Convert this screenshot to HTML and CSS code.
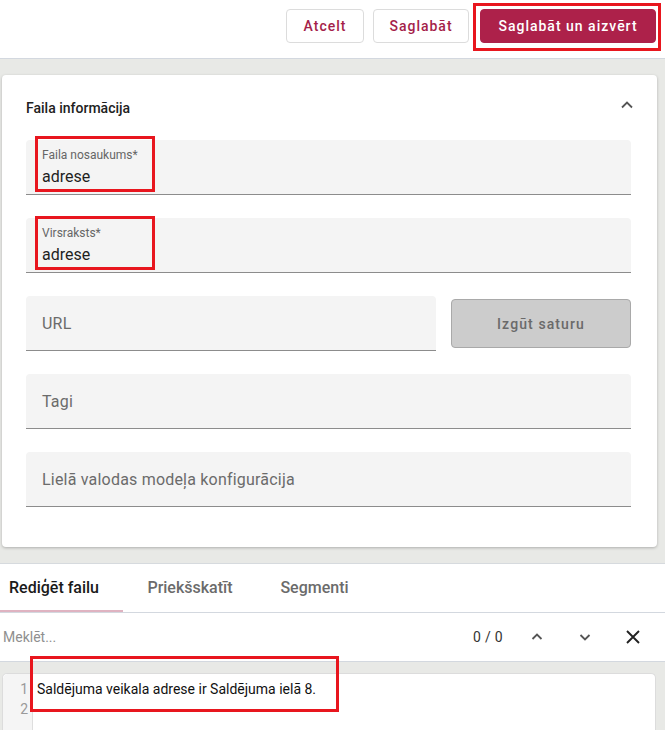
FILE: index.html
```html
<!DOCTYPE html>
<html lang="lv">
<head>
<meta charset="utf-8">
<title>Faila informācija</title>
<link rel="stylesheet" href="styles.css">
</head>
<body>
<div class="page">
  <header class="topbar">
    <button class="btn btn-outline">Atcelt</button>
    <button class="btn btn-outline">Saglabāt</button>
    <button class="btn btn-primary">Saglabāt un aizvērt</button>
  </header>

  <main class="main">
    <section class="card">
      <div class="card-head">
        <h2 class="card-title">Faila informācija</h2>
        <svg class="chev" width="14" height="10" viewBox="0 0 14 10"><path d="M2 7.5 L7 2.5 L12 7.5" fill="none" stroke="#555" stroke-width="1.8"/></svg>
      </div>
      <div class="fields">
        <div class="field filled">
          <span class="label">Faila nosaukums*</span>
          <span class="value">adrese</span>
        </div>
        <div class="field filled">
          <span class="label">Virsraksts*</span>
          <span class="value">adrese</span>
        </div>
        <div class="url-row">
          <div class="field empty url"><span class="placeholder">URL</span></div>
          <button class="btn-extract">Izgūt saturu</button>
        </div>
        <div class="field empty"><span class="placeholder">Tagi</span></div>
        <div class="field empty"><span class="placeholder">Lielā valodas modeļa konfigurācija</span></div>
      </div>
    </section>
  </main>

  <nav class="tabs">
    <div class="tab active">Rediģēt failu</div>
    <div class="tab">Priekšskatīt</div>
    <div class="tab">Segmenti</div>
  </nav>

  <div class="search">
    <span class="search-input">Meklēt...</span>
    <span class="count">0 / 0</span>
    <svg class="ic" width="16" height="16" viewBox="0 0 16 16"><path d="M3.5 10 L8 5.5 L12.5 10" fill="none" stroke="#555" stroke-width="1.8"/></svg>
    <svg class="ic" width="16" height="16" viewBox="0 0 16 16"><path d="M3.5 6 L8 10.5 L12.5 6" fill="none" stroke="#555" stroke-width="1.8"/></svg>
    <svg class="ic close" width="16" height="16" viewBox="0 0 16 16"><path d="M2 2 L14 14 M14 2 L2 14" fill="none" stroke="#222" stroke-width="1.9"/></svg>
  </div>

  <div class="editor-wrap">
    <div class="editor">
      <div class="gutter"><div>1</div><div>2</div></div>
      <div class="code"><div>Saldējuma veikala adrese ir Saldējuma ielā 8.</div><div>&nbsp;</div></div>
    </div>
  </div>

  <div class="mark m1"></div>
  <div class="mark m2"></div>
  <div class="mark m3"></div>
  <div class="mark m4"></div>
</div>
</body>
</html>
```

FILE: styles.css
```css
* { box-sizing: border-box; }
html, body { margin: 0; padding: 0; }
body {
  font-family: Roboto, "Noto Sans", "Liberation Sans", sans-serif;
  color: #222;
  background: #fff;
  width: 665px;
  height: 730px;
  overflow: hidden;
}
.page { position: relative; display: flex; flex-direction: column; height: 730px; }

.topbar {
  height: 59px;
  display: flex;
  justify-content: flex-end;
  align-items: flex-start;
  padding: 9px 9px 0 0;
  gap: 9px;
  border-bottom: 1px solid #d3d8df;
  background: #fff;
}
.btn {
  font-family: inherit;
  height: 34px;
  font-size: 14px;
  font-weight: 500;
  letter-spacing: 1px;
  border-radius: 4px;
  cursor: pointer;
}
.btn-outline {
  background: #fff;
  color: #a51f4a;
  border: 1px solid #dcdcdc;
  padding: 0 12px;
}
.btn-outline:first-child { width: 78px; }
.btn-outline:nth-child(2) { width: 96px; }
.btn-primary {
  margin-left: 2px;
  width: 176px;
  background: #ad214a;
  color: #fff;
  border: 1px solid #ad214a;
  padding: 0 10px;
}

.main {
  background: #e8e9e6;
  padding: 16px 8px 16px 2px;
}
.card {
  background: #fff;
  border-radius: 4px;
  box-shadow: 0 1px 3px rgba(0,0,0,0.25);
  height: 472px;
  padding: 0 26px 0 24px;
}
.card-head {
  height: 65px;
  display: flex;
  justify-content: space-between;
  align-items: center;
}
.card-title {
  margin: 0;
  font-size: 14px;
  font-weight: 500;
  color: #212121;
}
.chev { margin-right: -3px; margin-top: -6px; }

.fields { display: flex; flex-direction: column; gap: 23px; }
.field {
  height: 55px;
  background: #f4f4f4;
  border-bottom: 1px solid #8c8c8c;
  border-radius: 4px 4px 0 0;
  padding: 0 16px;
  display: flex;
  flex-direction: column;
  justify-content: center;
}
.field.filled { justify-content: flex-start; padding-top: 7px; }
.label { font-size: 12px; color: #666; line-height: 16px; }
.value { font-size: 16px; color: #1f1f1f; line-height: 22px; margin-top: 3px; }
.placeholder { font-size: 16px; color: #6b6b6b; letter-spacing: 0.2px; margin-top: 1px; }

.url-row { display: flex; align-items: center; gap: 15px; }
.field.url { width: 410px; }
.btn-extract {
  flex: 1;
  height: 49px;
  background: #cccccc;
  border: 1px solid #a9a9a9;
  border-radius: 4px;
  font-family: inherit;
  font-size: 14px;
  font-weight: 500;
  letter-spacing: 1.1px;
  color: #6a6a6a;
}

.tabs {
  display: flex;
  height: 50px;
  border-top: 1px solid #d6dade;
  border-bottom: 1px solid #d3d8df;
  background: #fff;
}
.tab {
  font-size: 16px;
  font-weight: 500;
  color: #6b6b6b;
  display: flex;
  align-items: center;
  justify-content: center;
  border-bottom: 2px solid transparent;
}
.tab:first-child { width: 123px; justify-content: flex-start; padding-left: 9px; }
.tab:nth-child(2) { width: 134px; }
.tab:nth-child(3) { width: 115px; }
.tab.active { color: #1a1a1a; border-bottom-color: #dfb3c1; }

.search {
  height: 49px;
  display: flex;
  align-items: center;
  border-bottom: 1px solid #d3d8df;
  background: #fff;
  padding-right: 24px;
}
.search-input {
  flex: 1;
  font-size: 14px;
  color: #8f8f8f;
  padding-left: 3px;
}
.count { font-size: 14px; color: #333; margin-right: 26px; letter-spacing: 0.3px; }
.ic { margin-left: 32px; }
.ic:first-of-type { margin-left: 0; }

.editor-wrap {
  flex: 1;
  background: #e8e9e6;
  padding: 11px 9px 0 2px;
}
.editor {
  height: 100%;
  background: #fff;
  border: 1px solid #dcdcdc;
  border-bottom: none;
  border-radius: 5px 5px 0 0;
  display: flex;
  padding-top: 5px;
  font-size: 14px;
  line-height: 20px;
}
.gutter {
  width: 30px;
  margin-top: -5px;
  padding-top: 5px;
  background: #f5f5f5;
  border-right: 1px solid #dedede;
  border-radius: 5px 0 0 0;
  color: #9a9a9a;
  text-align: right;
  padding-right: 4px;
}
.code { padding-left: 4px; color: #111; }

.mark {
  position: absolute;
  border: 3px solid #e8161e;
  pointer-events: none;
}
.m1 { left: 473px; top: 3px; width: 188px; height: 48px; }
.m2 { left: 35px; top: 136px; width: 120px; height: 56px; }
.m3 { left: 35px; top: 216px; width: 120px; height: 54px; }
.m4 { left: 30px; top: 656px; width: 309px; height: 56px; }
```
